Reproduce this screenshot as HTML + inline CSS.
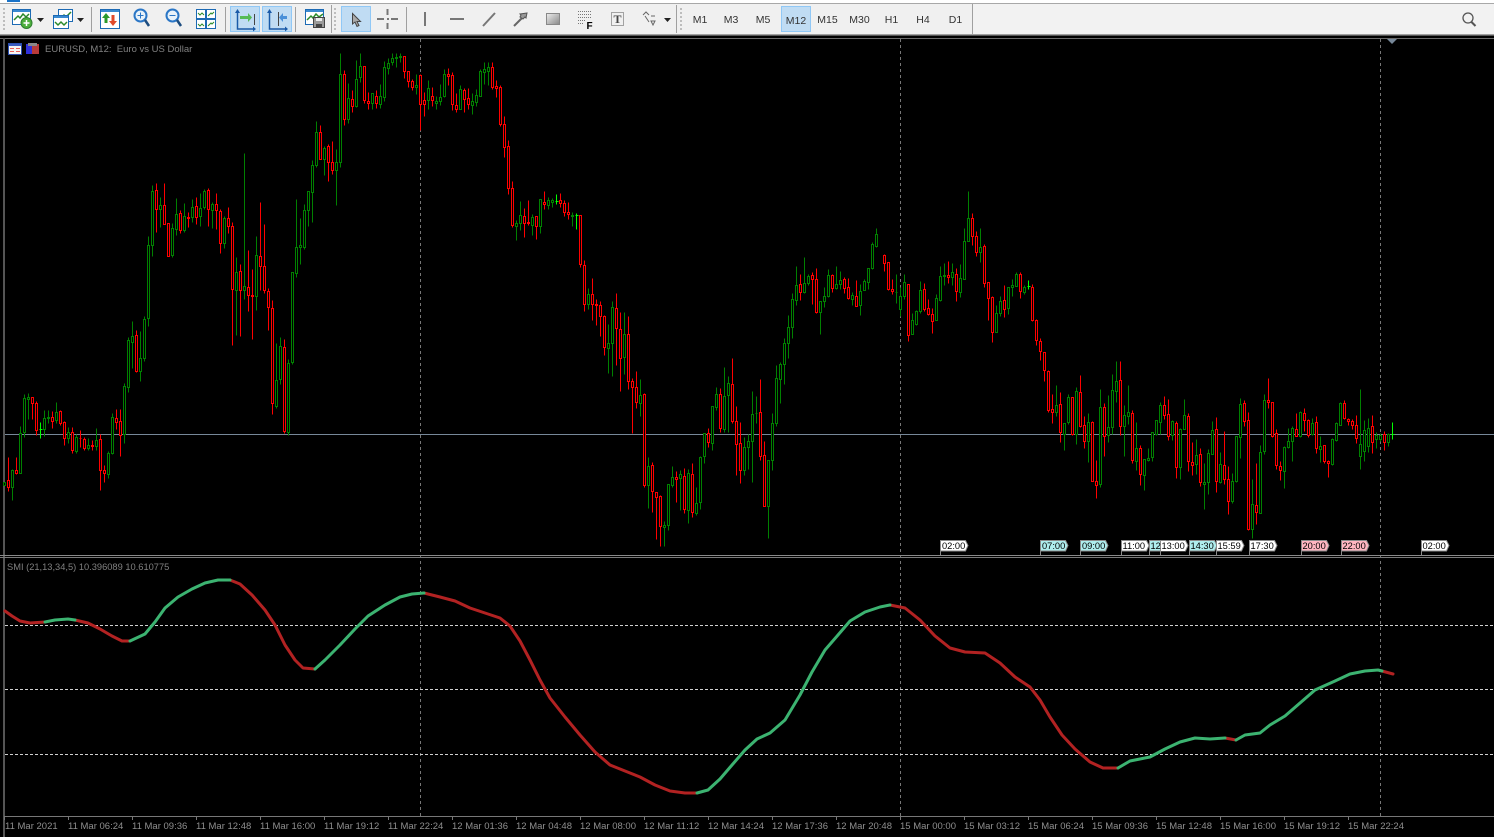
<!DOCTYPE html>
<html><head><meta charset="utf-8"><title>EURUSD M12</title>
<style>
html,body{margin:0;padding:0;background:#000;width:1494px;height:837px;overflow:hidden}
svg{display:block}
text{font-family:"Liberation Sans",sans-serif}
.tb{font-size:10.5px;fill:#333;text-anchor:middle}
</style></head><body>
<svg width="1494" height="837" viewBox="0 0 1494 837" xmlns="http://www.w3.org/2000/svg">
<defs><linearGradient id="gr" x1="0" y1="0" x2="1" y2="1"><stop offset="0" stop-color="#eee"/><stop offset="1" stop-color="#888"/></linearGradient></defs>
<rect width="1494" height="837" fill="#000"/>
<rect width="1494" height="3" fill="#fff"/><rect x="7" width="13" height="2" fill="#1a73c8"/>
<rect y="3" width="1494" height="1" fill="#a8a8a8"/>
<rect y="4" width="1494" height="30" fill="#f0f0f0"/>
<rect y="34" width="1494" height="1" fill="#a0a0a0"/><rect y="35" width="1494" height="1" fill="#555"/>
<rect y="38" width="1494" height="1" fill="#6a6a6a"/>
<rect x="3" y="38" width="2" height="799" fill="#555"/>
<rect x="973" y="4" width="521" height="30" fill="#f2f2f2"/><rect x="972" y="4" width="1" height="30" fill="#a0a0a0"/>
<!-- highlights -->
<g fill="#c0dcf3" stroke="#90c8f6"><rect x="230.500" y="6.500" width="29" height="25"/><rect x="262.500" y="6.500" width="29" height="25"/><rect x="341.500" y="6.500" width="29" height="25"/><rect x="781.500" y="6.500" width="29" height="25"/></g>
<!-- grippers -->
<g fill="#bdbdbd"><path d="M3 8h2v2H3zM3 12h2v2H3zM3 16h2v2H3zM3 20h2v2H3zM3 24h2v2H3zM3 28h2v2H3z"/><path d="M334 8h2v2h-2zM334 12h2v2h-2zM334 16h2v2h-2zM334 20h2v2h-2zM334 24h2v2h-2zM334 28h2v2h-2z"/><path d="M680 8h2v2h-2zM680 12h2v2h-2zM680 16h2v2h-2zM680 20h2v2h-2zM680 24h2v2h-2zM680 28h2v2h-2z"/></g>
<!-- separators -->
<g fill="#a0a0a0"><rect x="91" y="7" width="1" height="25"/><rect x="225" y="7" width="1" height="25"/><rect x="295" y="7" width="1" height="25"/><rect x="331" y="5" width="1" height="28"/><rect x="406" y="7" width="1" height="25"/><rect x="676" y="5" width="1" height="28"/></g>
<!-- dropdowns -->
<g fill="#222"><path d="M37 18h7l-3.500 4zM77 18h7l-3.500 4zM664 18h7l-3.500 4z"/></g>
<!-- new chart -->
<g fill="none"><rect x="12.500" y="9.500" width="18" height="15" fill="#fff" stroke="#1c6ab4"/><rect x="13" y="10" width="17" height="2" fill="#3a8ad0"/><path d="M14 20l4-4 2 2 3-4 3 3 3-3" stroke="#2b8a2b" stroke-width="1.500"/><circle cx="26.500" cy="23" r="5.500" fill="#4cae3c" stroke="#2f7f2f"/><path d="M26.500 20v6M23.500 23h6" stroke="#fff" stroke-width="1.500"/></g>
<!-- profiles -->
<g fill="none"><rect x="58.500" y="9.500" width="14" height="12" fill="#fff" stroke="#1c6ab4"/><path d="M61 18l3-3 2 2 5-5" stroke="#2b8a2b" stroke-width="1.500"/><rect x="53.500" y="15.500" width="15" height="13" fill="#fff" stroke="#1c6ab4"/><rect x="54" y="16" width="14" height="2" fill="#3a8ad0"/><path d="M55 22l3 3 3-3 3 3 3-3" stroke="#2b8a2b" stroke-width="1.500"/></g>
<!-- market watch -->
<g><rect x="100.500" y="9.500" width="19" height="19" fill="#fff" stroke="#1c6ab4"/><rect x="101" y="10" width="18" height="2" fill="#3a8ad0"/><path d="M106 13l-4 5h2.500v5h3v-5h2.500z" fill="#2b9a2b"/><path d="M113 26l4-5h-2.500v-6h-3v6H109z" fill="#e04a2a"/></g>
<!-- zoom -->
<g fill="#e8f2fa" stroke="#2a76c6" stroke-width="2"><circle cx="140.500" cy="15.500" r="6"/><circle cx="172.500" cy="15.500" r="6"/></g>
<g fill="none" stroke="#2a76c6"><path d="M137.500 15.500h6M140.500 12.500v6M169.500 15.500h6"/></g>
<g fill="none" stroke="#1d4d80" stroke-width="2.500"><path d="M145 20l4 6M177 20l4 6"/></g>
<!-- tile -->
<g><g fill="#fff" stroke="#1c6ab4"><rect x="196.500" y="9.500" width="9" height="9"/><rect x="206.500" y="9.500" width="9" height="9"/><rect x="196.500" y="19.500" width="9" height="9"/><rect x="206.500" y="19.500" width="9" height="9"/></g><path d="M198 13l2 2 2-2 2 2M208 16l3-3 1 1 2-2M198 24l2 2 2-2 2 2M208 26l3-3 1 1 2-2" fill="none" stroke="#2b8a2b"/></g>
<!-- shift -->
<g fill="none" stroke="#1a5aa8" stroke-width="1.500"><path d="M237.500 11v18h17"/><path d="M269.500 11v18h17"/></g>
<g fill="#1a5aa8"><path d="M237.500 9l-2.500 4h5zM256 29l-3-2.500v5zM269.500 9l-2.500 4h5zM288 29l-3-2.500v5z"/></g>
<path d="M254.500 14v11M278.500 12v14" stroke="#444" fill="none"/>
<path d="M240 16h8v-3l4 4.500-4 4.500v-3h-8z" fill="#55bb55"/>
<path d="M287 16h-4v-3l-4 4.500 4 4.500v-3h4z" fill="#4a90d8"/>
<!-- template -->
<g><rect x="305.500" y="9.500" width="18" height="15" fill="#fff" stroke="#1c6ab4"/><rect x="306" y="10" width="17" height="2" fill="#3a8ad0"/><path d="M307 20l4-4 2 2 3-4 3 3 4-3" fill="none" stroke="#2b8a2b" stroke-width="1.500"/><rect x="313.500" y="17.500" width="11" height="10" fill="#9a9a9a" stroke="#444"/><rect x="316" y="18" width="6" height="3" fill="#eee"/><rect x="316" y="24" width="6" height="3" fill="#444"/></g>
<!-- cursor -->
<path d="M352.500 13.500V24l2.500-2 2 4.500 2-1-2-4h3.500z" fill="#aaa" stroke="#444"/>
<path d="M377 19h7M391 19h7M387.500 9v6M387.500 23v6" stroke="#777" stroke-width="2" fill="none"/><rect x="387" y="18" width="2" height="2" fill="#777"/>
<!-- draw tools -->
<path d="M425 12v14M450 19h14M483 26l12-13" stroke="#777" stroke-width="2" fill="none"/>
<path d="M514 26l10-10" stroke="#666" stroke-width="2" fill="none"/><path d="M527 13l-7 1 1 1-1 2 3 2 2-2 1 1z" fill="#999" stroke="#555"/>
<rect x="546.500" y="13.500" width="13" height="11" fill="url(#gr)" stroke="#888"/>
<path d="M578 11.500h13M578 14.500h13M578 17.500h13M578 20.500h7M578 23.500h6" stroke="#777" stroke-dasharray="1 1" fill="none"/>
<text x="586.500" y="29" font-size="10" font-weight="bold" fill="#000">F</text>
<rect x="611.500" y="12.500" width="12" height="13" fill="none" stroke="#555" stroke-dasharray="1 1"/>
<text x="617.500" y="23" font-size="12" font-weight="bold" fill="#444" text-anchor="middle" style="font-family:'Liberation Serif',serif">T</text>
<path d="M643 15l3-3 3 3M645 16l4 6M655 16l-4 0M651 21h4l-2 4-2-4z" fill="none" stroke="#666"/>
<!-- periods -->
<text class="tb" x="700" y="23">M1</text><text class="tb" x="731" y="23">M3</text><text class="tb" x="763" y="23">M5</text><text class="tb" x="796" y="24">M12</text><text class="tb" x="827.500" y="23">M15</text><text class="tb" x="859.500" y="23">M30</text><text class="tb" x="891.500" y="23">H1</text><text class="tb" x="923" y="23">H4</text><text class="tb" x="955.500" y="23">D1</text>
<!-- search -->
<circle cx="1468" cy="18" r="5" fill="none" stroke="#555" stroke-width="1.300"/><path d="M1471.500 22l4 4" stroke="#555" stroke-width="2"/>
<!-- chart title icons -->
<g><rect x="8.500" y="43.500" width="13" height="11" fill="#f4f4f4" stroke="#2b4fb0"/><rect x="9" y="44" width="12" height="2" fill="#3a5cc0"/><path d="M10 48h4v1h-4zM16 48h4v1h-4zM10 51h4v1h-4zM16 51h4v1h-4z" fill="#e8605a"/></g>
<g><rect x="26" y="44" width="6" height="10" fill="#3030d8"/><rect x="32" y="44" width="7" height="10" fill="#b83a3a"/><rect x="28" y="43" width="9" height="3" fill="#888"/></g>
<text x="45" y="52" font-size="9.500" fill="#808080" style="white-space:pre" xml:space="preserve">EURUSD, M12:  Euro vs US Dollar</text>
<!-- bid line -->
<rect x="5" y="434" width="1489" height="1" fill="#778899"/>
<!-- period separators -->
<path d="M420.500 39V816M900.500 39V816M1380.500 39V816" stroke="#777" stroke-dasharray="3 3" fill="none"/>
<path d="M1387 39h10l-5 5z" fill="#778899"/>
<!-- candles -->
<g transform="translate(.5 .5)" shape-rendering="crispEdges" stroke-width="1">
<path fill="none" stroke="#008000" d="M4 482V485M12 469V500M20 426V473M24 394V437M28 393V419M44 410V436M48 410V423M56 402V423M68 427V443M76 434V453M88 438V450M96 428V450M108 451V478M112 413V454M124 383V443M128 337V392M132 321V368M140 331V381M144 316V361M148 236V326M152 185V256M160 197V227M172 223V257M176 198V235M184 203V232M192 199V222M200 193V226M204 189V209M212 202V228M224 216V248M236 257V335M244 153V299M256 236V310M276 343V408M280 337V384M288 359V435M292 272V364M296 199V277M300 218V264M304 204V249M308 191V226M312 160V222M316 121V167M324 146V175M336 149V205M340 53V167M348 83V123M356 60V107M360 53V82M372 93V109M380 84V108M384 61V101M388 58V74M392 53V65M396 53V67M400 53V62M416 74V94M428 80V109M436 96V109M440 84V105M444 69V97M460 85V109M472 93V114M476 89V106M480 69V96M484 62V84M488 62V85M516 220V240M520 201V230M532 214V235M540 199V233M548 197V209M552 198V207M572 212V226M588 288V309M608 324V373M612 301V376M624 312V374M640 379V416M648 457V508M664 521V546M668 484V530M672 466V487M680 470V510M688 469V523M696 487V515M700 456V509M704 433V463M712 406V450M716 387V410M724 367V432M728 376V432M744 437V475M748 434V469M752 391V482M756 396V423M768 460V538M772 413V470M776 365V426M780 362V403M784 338V384M788 315V358M792 293V338M796 266V305M804 257V293M808 274V285M820 301V334M824 287V307M828 269V297M836 266V289M840 271V289M852 292V305M860 284V315M864 279V290M868 268V289M872 242V269M876 228V247M896 274V303M900 287V316M904 274V299M912 313V334M916 310V325M920 281V313M936 294V320M940 266V301M944 263V285M952 263V285M960 264V297M964 228V279M968 191V241M980 228V262M996 305V332M1000 296V316M1008 287V314M1012 279V296M1016 272V286M1024 285V294M1056 385V416M1064 423V450M1068 394V424M1076 387V444M1088 413V462M1100 389V487M1108 395V442M1112 374V434M1116 361V402M1124 405V456M1128 385V424M1136 422V470M1144 459V490M1148 448V461M1152 432V461M1156 420V435M1160 402V434M1172 420V440M1180 428V479M1184 399V429M1196 439V474M1204 463V509M1208 449V494M1212 421V454M1220 452V483M1232 473V503M1236 436V482M1240 398V458M1252 479V538M1260 445V513M1264 394V454M1284 446V488M1288 428V448M1292 426V461M1300 411V437M1312 418V435M1320 436V462M1332 438V465M1336 422V441M1340 402V425M1360 389V469M1364 420V461M1368 418V452M1376 432V448M1380 433V441M1388 433V446"/>
<path fill="none" stroke="#f00" d="M8 457V491M16 457V474M32 397V419M36 401V435M52 411V428M60 410V425M64 421V445M72 427V453M80 430V447M84 437V450M92 440V450M100 434V490M104 465V482M116 409V429M120 409V456M136 330V372M156 183V232M164 183V224M168 223V256M180 210V233M188 212V227M196 197V224M208 188V226M216 193V229M220 209V253M228 207V233M232 222V345M240 264V336M248 250V311M252 269V339M260 202V290M264 224V293M268 288V330M272 300V414M284 339V433M320 125V159M328 144V181M332 141V174M344 70V125M352 90V112M364 66V103M368 92V109M376 90V108M404 56V78M408 71V87M412 79V90M420 74V130M424 92V116M432 87V106M448 68V85M452 72V110M456 93V112M464 88V112M468 88V109M492 62V89M496 80V97M500 85V126M504 116V157M508 140V194M512 181V227M524 208V237M528 200V225M536 216V239M544 191V209M560 193V207M564 200V216M568 202V219M580 215V267M584 260V311M592 278V320M596 299V325M600 301V336M604 315V355M616 293V365M620 312V391M628 316V389M632 378V433M636 371V408M644 393V487M652 462V512M656 492V539M660 495V546M676 471V502M684 468V513M692 463V517M708 428V447M720 388V432M732 358V423M736 406V475M740 422V483M760 379V460M764 441V506M800 274V300M812 272V304M816 268V313M832 274V292M844 277V293M848 278V299M856 280V306M884 254V271M888 262V290M892 279V294M908 284V341M924 283V311M928 299V315M932 308V333M948 261V283M956 268V301M972 213V245M976 231V256M984 244V287M988 282V320M992 296V342M1004 285V317M1020 272V298M1032 284V321M1036 319V345M1040 338V360M1044 352V381M1048 370V412M1052 394V423M1060 392V442M1072 397V435M1080 375V427M1084 416V448M1092 421V481M1096 460V498M1104 403V456M1120 361V435M1132 410V463M1140 445V485M1164 396V419M1168 399V440M1176 421V478M1188 413V471M1192 442V475M1200 448V486M1216 417V492M1224 431V484M1228 466V514M1244 400V426M1248 412V530M1256 463V524M1268 378V408M1272 402V437M1276 429V469M1280 461V480M1296 413V436M1304 408V431M1308 419V437M1316 416V453M1324 445V463M1328 460V477M1344 400V419M1348 418V425M1352 419V429M1356 415V443M1372 415V453M1384 431V450"/>
<path fill="#000" stroke="#008000" d="M3 482h2V485h-2zM11 470h2V487h-2zM19 433h2V473h-2zM23 398h2V432h-2zM27 397h2V399h-2zM43 418h2V429h-2zM47 417h2V418h-2zM55 412h2V420h-2zM67 432h2V438h-2zM75 437h2V451h-2zM87 445h2V448h-2zM95 440h2V446h-2zM107 453h2V474h-2zM111 417h2V453h-2zM123 386h2V434h-2zM127 340h2V387h-2zM131 336h2V342h-2zM139 358h2V371h-2zM143 319h2V358h-2zM147 245h2V318h-2zM151 191h2V245h-2zM159 205h2V209h-2zM171 228h2V255h-2zM175 214h2V229h-2zM183 216h2V230h-2zM191 207h2V217h-2zM199 208h2V216h-2zM203 191h2V207h-2zM211 204h2V210h-2zM223 218h2V243h-2zM235 272h2V290h-2zM243 286h2V290h-2zM255 255h2V296h-2zM275 380h2V406h-2zM279 346h2V379h-2zM287 363h2V432h-2zM291 272h2V362h-2zM295 247h2V273h-2zM299 245h2V247h-2zM303 210h2V247h-2zM307 191h2V210h-2zM311 165h2V192h-2zM315 132h2V165h-2zM323 148h2V159h-2zM335 162h2V170h-2zM339 74h2V162h-2zM347 98h2V119h-2zM355 79h2V106h-2zM359 66h2V77h-2zM371 93h2V103h-2zM379 96h2V104h-2zM383 67h2V97h-2zM387 63h2V68h-2zM391 58h2V62h-2zM395 57h2V58h-2zM399 56h2V57h-2zM415 85h2V87h-2zM427 88h2V100h-2zM435 101h2V103h-2zM439 97h2V101h-2zM443 74h2V96h-2zM459 89h2V109h-2zM471 101h2V105h-2zM475 95h2V102h-2zM479 71h2V96h-2zM483 69h2V72h-2zM487 67h2V71h-2zM515 223h2V226h-2zM519 215h2V223h-2zM531 217h2V225h-2zM539 199h2V226h-2zM547 200h2V205h-2zM551 200h2V202h-2zM571 215h2V216h-2zM587 294h2V304h-2zM607 343h2V348h-2zM611 307h2V343h-2zM623 334h2V357h-2zM639 395h2V403h-2zM647 466h2V485h-2zM663 525h2V527h-2zM667 484h2V525h-2zM671 477h2V485h-2zM679 474h2V478h-2zM687 473h2V510h-2zM695 503h2V513h-2zM699 457h2V502h-2zM703 433h2V456h-2zM711 406h2V443h-2zM715 394h2V407h-2zM723 396h2V429h-2zM727 383h2V395h-2zM743 447h2V470h-2zM747 441h2V447h-2zM751 414h2V441h-2zM755 413h2V413h-2zM767 460h2V506h-2zM771 423h2V460h-2zM775 378h2V423h-2zM779 364h2V379h-2zM783 343h2V364h-2zM787 327h2V343h-2zM791 299h2V327h-2zM795 285h2V300h-2zM803 283h2V292h-2zM807 276h2V283h-2zM819 301h2V312h-2zM823 296h2V301h-2zM827 275h2V296h-2zM835 284h2V288h-2zM839 280h2V284h-2zM851 295h2V299h-2zM859 291h2V305h-2zM863 281h2V290h-2zM867 268h2V282h-2zM871 244h2V268h-2zM875 234h2V246h-2zM895 292h2V292h-2zM899 296h2V309h-2zM903 282h2V296h-2zM911 320h2V334h-2zM915 311h2V324h-2zM919 290h2V311h-2zM935 298h2V320h-2zM939 276h2V300h-2zM943 275h2V276h-2zM951 272h2V277h-2zM959 278h2V292h-2zM963 241h2V279h-2zM967 218h2V241h-2zM979 247h2V252h-2zM995 313h2V332h-2zM999 301h2V313h-2zM1007 287h2V308h-2zM1011 285h2V287h-2zM1015 274h2V286h-2zM1023 287h2V292h-2zM1055 405h2V412h-2zM1063 423h2V434h-2zM1067 397h2V422h-2zM1075 391h2V434h-2zM1087 422h2V441h-2zM1099 407h2V484h-2zM1107 427h2V435h-2zM1111 390h2V427h-2zM1115 381h2V391h-2zM1123 415h2V426h-2zM1127 412h2V416h-2zM1135 448h2V461h-2zM1143 459h2V475h-2zM1147 458h2V460h-2zM1151 432h2V457h-2zM1155 420h2V434h-2zM1159 405h2V422h-2zM1171 421h2V435h-2zM1179 429h2V467h-2zM1183 415h2V429h-2zM1195 455h2V464h-2zM1203 482h2V484h-2zM1207 453h2V482h-2zM1211 430h2V454h-2zM1219 464h2V482h-2zM1231 481h2V501h-2zM1235 436h2V481h-2zM1239 404h2V437h-2zM1251 504h2V529h-2zM1259 452h2V513h-2zM1263 400h2V451h-2zM1283 447h2V471h-2zM1287 441h2V447h-2zM1291 428h2V441h-2zM1299 412h2V436h-2zM1311 423h2V434h-2zM1319 446h2V449h-2zM1331 439h2V464h-2zM1335 423h2V440h-2zM1339 403h2V425h-2zM1359 444h2V456h-2zM1363 430h2V451h-2zM1367 428h2V446h-2zM1375 435h2V439h-2zM1379 435h2V439h-2zM1387 434h2V442h-2z"/>
<path fill="#000" stroke="#f00" d="M7 480h2V487h-2zM15 470h2V473h-2zM31 397h2V403h-2zM35 403h2V430h-2zM51 417h2V421h-2zM59 411h2V423h-2zM63 422h2V438h-2zM71 432h2V450h-2zM79 438h2V438h-2zM83 439h2V448h-2zM91 445h2V446h-2zM99 439h2V470h-2zM103 470h2V473h-2zM115 418h2V422h-2zM119 421h2V435h-2zM135 335h2V371h-2zM155 190h2V209h-2zM163 205h2V224h-2zM167 223h2V256h-2zM179 213h2V230h-2zM187 217h2V218h-2zM195 206h2V217h-2zM207 190h2V209h-2zM215 204h2V210h-2zM219 211h2V243h-2zM227 218h2V226h-2zM231 226h2V289h-2zM239 271h2V290h-2zM247 287h2V295h-2zM251 295h2V296h-2zM259 256h2V266h-2zM263 266h2V290h-2zM267 291h2V307h-2zM271 308h2V403h-2zM283 347h2V431h-2zM319 132h2V159h-2zM327 146h2V162h-2zM331 162h2V170h-2zM343 74h2V119h-2zM351 99h2V106h-2zM363 66h2V100h-2zM367 101h2V103h-2zM375 96h2V103h-2zM403 56h2V71h-2zM407 71h2V81h-2zM411 81h2V87h-2zM419 75h2V104h-2zM423 100h2V104h-2zM431 96h2V100h-2zM447 74h2V76h-2zM451 75h2V104h-2zM455 105h2V109h-2zM463 90h2V99h-2zM467 98h2V104h-2zM491 67h2V87h-2zM495 86h2V88h-2zM499 87h2V124h-2zM503 124h2V147h-2zM507 146h2V188h-2zM511 188h2V225h-2zM523 216h2V223h-2zM527 222h2V223h-2zM535 216h2V226h-2zM543 202h2V204h-2zM559 200h2V203h-2zM563 203h2V212h-2zM567 212h2V214h-2zM579 215h2V264h-2zM583 265h2V304h-2zM591 294h2V304h-2zM595 304h2V305h-2zM599 305h2V316h-2zM603 316h2V347h-2zM615 308h2V328h-2zM619 329h2V358h-2zM627 334h2V381h-2zM631 381h2V387h-2zM635 387h2V402h-2zM643 394h2V485h-2zM651 465h2V491h-2zM655 492h2V497h-2zM659 496h2V526h-2zM675 477h2V479h-2zM683 476h2V509h-2zM691 474h2V512h-2zM707 433h2V442h-2zM719 394h2V428h-2zM731 384h2V421h-2zM735 421h2V444h-2zM739 443h2V470h-2zM759 412h2V456h-2zM763 455h2V506h-2zM799 284h2V292h-2zM811 275h2V279h-2zM815 279h2V312h-2zM831 275h2V288h-2zM843 279h2V288h-2zM847 287h2V298h-2zM855 296h2V306h-2zM883 255h2V263h-2zM887 262h2V289h-2zM891 289h2V291h-2zM907 284h2V335h-2zM923 289h2V309h-2zM927 308h2V314h-2zM931 314h2V321h-2zM947 275h2V277h-2zM955 274h2V291h-2zM971 218h2V236h-2zM975 236h2V252h-2zM983 246h2V283h-2zM987 282h2V298h-2zM991 297h2V332h-2zM1003 300h2V309h-2zM1019 274h2V291h-2zM1031 287h2V320h-2zM1035 320h2V340h-2zM1039 341h2V351h-2zM1043 352h2V370h-2zM1047 371h2V410h-2zM1051 409h2V412h-2zM1059 404h2V432h-2zM1071 397h2V434h-2zM1079 392h2V426h-2zM1083 425h2V441h-2zM1091 422h2V481h-2zM1095 481h2V485h-2zM1103 407h2V436h-2zM1119 380h2V426h-2zM1131 413h2V460h-2zM1139 448h2V474h-2zM1163 405h2V415h-2zM1167 414h2V436h-2zM1175 423h2V467h-2zM1187 416h2V461h-2zM1191 462h2V465h-2zM1199 454h2V482h-2zM1215 429h2V481h-2zM1223 465h2V479h-2zM1227 479h2V501h-2zM1243 403h2V421h-2zM1247 420h2V529h-2zM1255 505h2V512h-2zM1267 400h2V402h-2zM1271 402h2V436h-2zM1275 433h2V465h-2zM1279 466h2V470h-2zM1295 429h2V436h-2zM1303 413h2V420h-2zM1307 420h2V435h-2zM1315 422h2V448h-2zM1323 445h2V461h-2zM1327 461h2V463h-2zM1343 403h2V418h-2zM1347 419h2V421h-2zM1351 421h2V425h-2zM1355 425h2V438h-2zM1371 426h2V442h-2zM1383 434h2V442h-2z"/>
<path fill="none" stroke="#0f0" d="M40 422V438M39 429h3M556 194V204M555 201h3M576 213V229M575 215h3M1028 280V289M1027 286h3M1392 422V439M1391 434h3"/>
</g>
<!-- tags -->
<g stroke="#8a8a8a" stroke-width="1">
<path fill="none" d="M940.500 551V556M1040.500 551V556M1080.500 551V556M1121.500 551V556M1149.500 551V556M1160.500 551V556M1189.500 551V556M1216.500 551V556M1249.500 551V556M1301.500 551V556M1341.500 551V556M1421.500 551V556"/>
<path fill="#fff" d="M940.500 540.500h25l2.500 5-2.500 5.500h-25z"/>
<path fill="#afeeee" d="M1040.500 540.500h25l2.500 5-2.500 5.500h-25z"/>
<path fill="#afeeee" d="M1080.500 540.500h25l2.500 5-2.500 5.500h-25z"/>
<path fill="#fff" d="M1121.500 540.500h25l2.500 5-2.500 5.500h-25z"/>
<path fill="#afeeee" d="M1149.500 540.500h25l2.500 5-2.500 5.500h-25z"/>
<path fill="#fff" d="M1160.500 540.500h25l2.500 5-2.500 5.500h-25z"/>
<path fill="#afeeee" d="M1189.500 540.500h25l2.500 5-2.500 5.500h-25z"/>
<path fill="#fff" d="M1216.500 540.500h25l2.500 5-2.500 5.500h-25z"/>
<path fill="#fff" d="M1249.500 540.500h25l2.500 5-2.500 5.500h-25z"/>
<path fill="#ffb6c1" d="M1301.500 540.500h25l2.500 5-2.500 5.500h-25z"/>
<path fill="#ffb6c1" d="M1341.500 540.500h25l2.500 5-2.500 5.500h-25z"/>
<path fill="#fff" d="M1421.500 540.500h25l2.500 5-2.500 5.500h-25z"/>
</g>
<g style="font-size:9.300px;fill:#000">
<text x="942" y="549">02:00</text><text x="1042" y="549">07:00</text><text x="1082" y="549">09:00</text><text x="1122.500" y="549">11:00</text><text x="1150.500" y="549">12</text><text x="1190.500" y="549">14:30</text><text x="1217.500" y="549">15:59</text><text x="1250.500" y="549">17:30</text><text x="1302.500" y="549">20:00</text><text x="1342.500" y="549">22:00</text><text x="1422.500" y="549">02:00</text>
</g>
<rect x="1161" y="541" width="24" height="10" fill="#fff"/><text x="1161.500" y="549" style="font-size:9.300px;fill:#000">13:00</text>
<!-- window separator -->
<rect x="0" y="555" width="1494" height="1" fill="#8a8a8a"/><rect x="0" y="557" width="1494" height="1" fill="#7a7a7a"/>
<text x="7" y="570" font-size="9.300" fill="#808080">SMI (21,13,34,5) 10.396089 10.610775</text>
<!-- SMI levels -->
<path d="M5 625.500H1494M5 689.500H1494M5 754.500H1494" stroke="#d0d0d0" stroke-dasharray="3 2" fill="none"/>
<!-- SMI curve -->
<g fill="none" stroke-width="3" stroke-linejoin="round" stroke-linecap="round">
<g stroke="#b22222">
<polyline points="5,611 12,616 20,621 30,623 45,622"/>
<polyline points="75,620 88,623 100,629 112,636 122,641 130,641"/>
<polyline points="230,580 240,584 252,595 265,610 275,625 285,645 295,660 303,668 315,669"/>
<polyline points="424,593 440,597 455,601 470,608 485,613 500,618 510,626 520,641 530,660 540,680 550,698 565,717 580,735 595,752 610,765 625,771 640,777 655,785 670,791 685,793 697,793"/>
<polyline points="890,605 905,608 920,620 935,636 950,648 965,652 985,653 1000,663 1015,677 1030,687 1040,700 1050,717 1062,735 1075,749 1090,762 1103,768 1118,768"/>
<polyline points="1225,738 1236,740"/>
<polyline points="1382,671 1393,674"/>
</g>
<g stroke="#3cb371">
<polyline points="45,622 55,620 68,619 75,620"/>
<polyline points="130,641 145,634 155,622 165,608 178,597 192,589 205,583 218,580 230,580"/>
<polyline points="315,669 325,660 340,645 355,629 368,616 385,605 400,597 412,594 424,593"/>
<polyline points="697,793 708,790 720,779 732,765 745,750 757,739 770,733 785,720 800,695 812,672 825,650 838,635 850,621 865,612 880,607 890,605"/>
<polyline points="1118,768 1130,761 1150,757 1165,749 1180,742 1195,738 1210,739 1225,738"/>
<polyline points="1236,740 1245,735 1260,733 1270,725 1285,716 1300,703 1315,690 1335,681 1350,674 1365,671 1378,670 1382,671"/>
</g>
</g>
<!-- time axis -->
<rect x="5" y="816" width="1489" height="1" fill="#777"/>
<path d="M4.500 816v4M68.500 816v4M132.500 816v4M196.500 816v4M260.500 816v4M324.500 816v4M388.500 816v4M452.500 816v4M516.500 816v4M580.500 816v4M644.500 816v4M708.500 816v4M772.500 816v4M836.500 816v4M900.500 816v4M964.500 816v4M1028.500 816v4M1092.500 816v4M1156.500 816v4M1220.500 816v4M1284.500 816v4M1348.500 816v4" stroke="#777" fill="none"/>
<g style="font-size:9.500px;fill:#8f8f8f">
<text x="5" y="829">11 Mar 2021</text><text x="68" y="829">11 Mar 06:24</text><text x="132" y="829">11 Mar 09:36</text><text x="196" y="829">11 Mar 12:48</text><text x="260" y="829">11 Mar 16:00</text><text x="324" y="829">11 Mar 19:12</text><text x="388" y="829">11 Mar 22:24</text><text x="452" y="829">12 Mar 01:36</text><text x="516" y="829">12 Mar 04:48</text><text x="580" y="829">12 Mar 08:00</text><text x="644" y="829">12 Mar 11:12</text><text x="708" y="829">12 Mar 14:24</text><text x="772" y="829">12 Mar 17:36</text><text x="836" y="829">12 Mar 20:48</text><text x="900" y="829">15 Mar 00:00</text><text x="964" y="829">15 Mar 03:12</text><text x="1028" y="829">15 Mar 06:24</text><text x="1092" y="829">15 Mar 09:36</text><text x="1156" y="829">15 Mar 12:48</text><text x="1220" y="829">15 Mar 16:00</text><text x="1284" y="829">15 Mar 19:12</text><text x="1348" y="829">15 Mar 22:24</text>
</g>
</svg>
</body></html>
